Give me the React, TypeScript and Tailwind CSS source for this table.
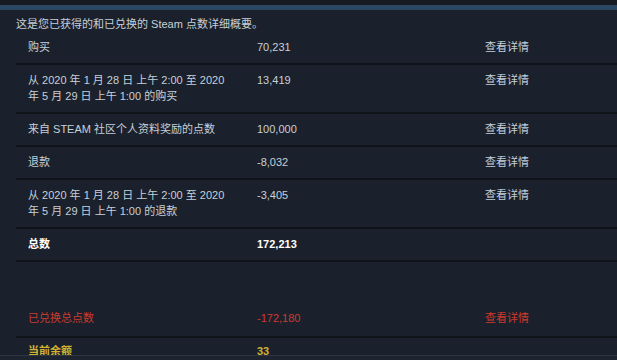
import React from "react";

type Row = { label: string; value: string; link?: boolean };

const rows: Row[] = [
  { label: "购买", value: "70,231", link: true },
  { label: "从 2020 年 1 月 28 日 上午 2:00 至 2020 年 5 月 29 日 上午 1:00 的购买", value: "13,419", link: true },
  { label: "来自 STEAM 社区个人资料奖励的点数", value: "100,000", link: true },
  { label: "退款", value: "-8,032", link: true },
  { label: "从 2020 年 1 月 28 日 上午 2:00 至 2020 年 5 月 29 日 上午 1:00 的退款", value: "-3,405", link: true },
];

export default function App() {
  return (
    <div
      className="relative w-[617px] h-[360px] overflow-hidden bg-[#1b212c] text-[11px] leading-[16px] text-[#c6d0d9]"
      style={{ fontFamily: '"Liberation Sans", Arial, "Noto Sans CJK SC", sans-serif' }}
    >
      {/* top strip */}
      <div className="h-[5px] bg-[#171a21]" />
      <div className="h-[5px] bg-[#2a4764]" />

      <p className="px-4 pt-[6px]">这是您已获得的和已兑换的 Steam 点数详细概要。</p>

      <div className="ml-4">
        {rows.map((r, i) => (
          <div key={i} className="grid grid-cols-[229px_228px_1fr] border-b-2 border-[#0f131a]">
            <div className="pl-3 pr-4 pt-[7px] pb-[8px]">{r.label}</div>
            <div className="px-3 pt-[7px] pb-[8px]">{r.value}</div>
            <div className="px-3 pt-[7px] pb-[8px] text-[#c3cfdb]">{r.link ? "查看详情" : ""}</div>
          </div>
        ))}

        {/* total */}
        <div className="grid grid-cols-[229px_228px_1fr] border-b-2 border-[#0f131a] font-bold text-white">
          <div className="pl-3 pr-4 pt-[7px] pb-[8px]">总数</div>
          <div className="px-3 pt-[7px] pb-[8px]">172,213</div>
          <div />
        </div>

        <div className="h-[40px]" />

        {/* redeemed */}
        <div className="grid grid-cols-[229px_228px_1fr] border-b-2 border-[#0f131a] text-[#cc3a2c]">
          <div className="pl-3 pr-4 pt-[8px] pb-[10px]">已兑换总点数</div>
          <div className="px-3 pt-[8px] pb-[10px]">-172,180</div>
          <div className="px-3 pt-[8px] pb-[10px]">查看详情</div>
        </div>

        {/* balance */}
        <div className="grid grid-cols-[229px_228px_1fr] font-bold text-[#d1b332]">
          <div className="pl-3 pr-4 pt-[5px] pb-[8px]">当前余额</div>
          <div className="px-3 pt-[5px] pb-[8px]">33</div>
          <div />
        </div>
      </div>

      {/* bottom bar overlay */}
      <div className="absolute left-0 right-0 bottom-0 h-[5px] bg-[#1d2430] border-t border-[#2c3540]" />
    </div>
  );
}
